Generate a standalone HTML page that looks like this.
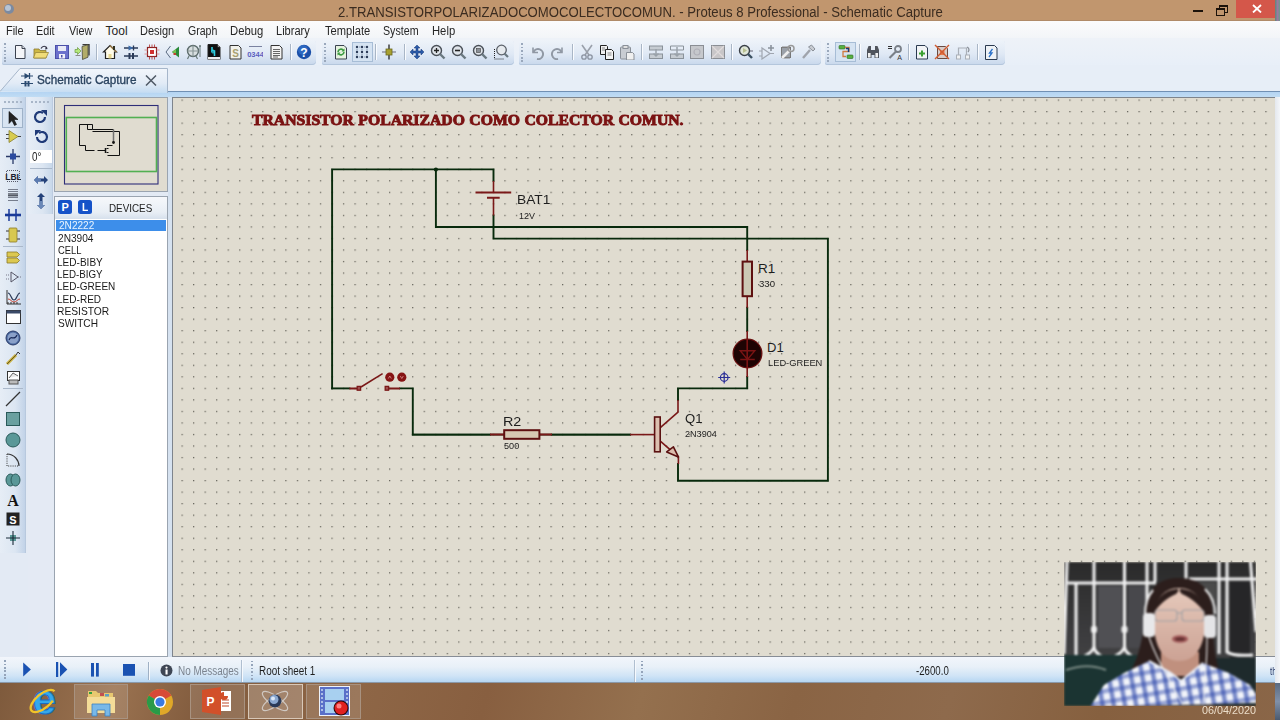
<!DOCTYPE html>
<html><head><meta charset="utf-8"><style>
*{margin:0;padding:0;box-sizing:border-box}
html,body{width:1280px;height:720px;overflow:hidden}
body{position:relative;background:#e3eaf4;font-family:"Liberation Sans",sans-serif;color:#000}
.a{position:absolute}
.t{position:absolute;white-space:nowrap;line-height:1;transform-origin:0 0}
</style></head><body>
<div class="a" style="left:0;top:0;width:1280px;height:21px;background:#c1966e;border-bottom:1px solid #b08a68"></div>
<svg class="a" style="left:2px;top:2px;" width="14" height="14" viewBox="0 0 14 14"><circle cx="7" cy="7" r="5" fill="#7c8aa0"/><circle cx="6" cy="6" r="3" fill="#b8c4d4"/></svg>
<div class="t" style="left:338.00px;top:4.50px;font-family:'Liberation Sans',sans-serif;font-weight:normal;font-size:14px;color:#3b2c20;transform:scaleX(0.9387);">2.TRANSISTORPOLARIZADOCOMOCOLECTOCOMUN. - Proteus 8 Professional - Schematic Capture</div>
<div class="a" style="left:1193px;top:10px;width:10px;height:2px;background:#1c120a"></div>
<div class="a" style="left:1219px;top:5px;width:9px;height:8px;border:1px solid #1c120a;border-top-width:2px"></div>
<div class="a" style="left:1216px;top:8px;width:9px;height:8px;border:1px solid #1c120a;border-top-width:2px;background:#c1966e"></div>
<div class="a" style="left:1236px;top:0;width:39px;height:18px;background:#d4574a"></div>
<svg class="a" style="left:1252px;top:4px;" width="10" height="9" viewBox="0 0 10 9"><path d="M1 1L9 8.5M9 1L1 8.5" stroke="#fff" stroke-width="1.8"/></svg>
<div class="a" style="left:1275px;top:0;width:5px;height:21px;background:linear-gradient(90deg,#5a8a7a,#9a7aa0,#6a9a8a)"></div>
<div class="a" style="left:0;top:21px;width:1280px;height:17px;background:linear-gradient(#fbfbfc,#f3f5f8)"></div>
<div class="t" style="left:6.19px;top:25.20px;font-family:'Liberation Sans',sans-serif;font-weight:normal;font-size:12px;color:#262626;transform:scaleX(0.9111);">File</div>
<div class="t" style="left:36.10px;top:25.20px;font-family:'Liberation Sans',sans-serif;font-weight:normal;font-size:12px;color:#262626;transform:scaleX(0.9000);">Edit</div>
<div class="t" style="left:68.50px;top:25.20px;font-family:'Liberation Sans',sans-serif;font-weight:normal;font-size:12px;color:#262626;transform:scaleX(0.9038);">View</div>
<div class="t" style="left:105.60px;top:25.20px;font-family:'Liberation Sans',sans-serif;font-weight:normal;font-size:12px;color:#262626;">Tool</div>
<div class="t" style="left:140.08px;top:25.20px;font-family:'Liberation Sans',sans-serif;font-weight:normal;font-size:12px;color:#262626;transform:scaleX(0.9167);">Design</div>
<div class="t" style="left:188.00px;top:25.20px;font-family:'Liberation Sans',sans-serif;font-weight:normal;font-size:12px;color:#262626;transform:scaleX(0.8788);">Graph</div>
<div class="t" style="left:230.36px;top:25.20px;font-family:'Liberation Sans',sans-serif;font-weight:normal;font-size:12px;color:#262626;transform:scaleX(0.9382);">Debug</div>
<div class="t" style="left:276.28px;top:25.20px;font-family:'Liberation Sans',sans-serif;font-weight:normal;font-size:12px;color:#262626;transform:scaleX(0.9222);">Library</div>
<div class="t" style="left:324.50px;top:25.20px;font-family:'Liberation Sans',sans-serif;font-weight:normal;font-size:12px;color:#262626;transform:scaleX(0.9286);">Template</div>
<div class="t" style="left:382.91px;top:25.20px;font-family:'Liberation Sans',sans-serif;font-weight:normal;font-size:12px;color:#262626;transform:scaleX(0.8897);">System</div>
<div class="t" style="left:432.06px;top:25.20px;font-family:'Liberation Sans',sans-serif;font-weight:normal;font-size:12px;color:#262626;transform:scaleX(0.9375);">Help</div>
<div class="a" style="left:0;top:38px;width:1280px;height:27px;background:linear-gradient(#eef2f8,#e8eff8)"></div>
<div class="a" style="left:2px;top:40px;width:314px;height:25px;border-radius:2px 4px 4px 2px;background:linear-gradient(#eef3f9,#e0e9f5 55%,#c8d8ec);box-shadow:inset 0 -1px 0 #b4c6dc"></div><div class="a" style="left:4px;top:43px;width:2px;height:19px;background:repeating-linear-gradient(#9aa8bc 0 1.5px,transparent 1.5px 3.5px)"></div>
<div class="a" style="left:322px;top:40px;width:192px;height:25px;border-radius:2px 4px 4px 2px;background:linear-gradient(#eef3f9,#e0e9f5 55%,#c8d8ec);box-shadow:inset 0 -1px 0 #b4c6dc"></div><div class="a" style="left:324px;top:43px;width:2px;height:19px;background:repeating-linear-gradient(#9aa8bc 0 1.5px,transparent 1.5px 3.5px)"></div>
<div class="a" style="left:519px;top:40px;width:302px;height:25px;border-radius:2px 4px 4px 2px;background:linear-gradient(#eef3f9,#e0e9f5 55%,#c8d8ec);box-shadow:inset 0 -1px 0 #b4c6dc"></div><div class="a" style="left:521px;top:43px;width:2px;height:19px;background:repeating-linear-gradient(#9aa8bc 0 1.5px,transparent 1.5px 3.5px)"></div>
<div class="a" style="left:825px;top:40px;width:180px;height:25px;border-radius:2px 4px 4px 2px;background:linear-gradient(#eef3f9,#e0e9f5 55%,#c8d8ec);box-shadow:inset 0 -1px 0 #b4c6dc"></div><div class="a" style="left:827px;top:43px;width:2px;height:19px;background:repeating-linear-gradient(#9aa8bc 0 1.5px,transparent 1.5px 3.5px)"></div>
<div class="a" style="left:96px;top:44px;width:1px;height:16px;background:#a9b6c6;box-shadow:1px 0 0 #fafcff"></div>
<div class="a" style="left:290px;top:44px;width:1px;height:16px;background:#a9b6c6;box-shadow:1px 0 0 #fafcff"></div>
<div class="a" style="left:375px;top:44px;width:1px;height:16px;background:#a9b6c6;box-shadow:1px 0 0 #fafcff"></div>
<div class="a" style="left:404px;top:44px;width:1px;height:16px;background:#a9b6c6;box-shadow:1px 0 0 #fafcff"></div>
<div class="a" style="left:572px;top:44px;width:1px;height:16px;background:#a9b6c6;box-shadow:1px 0 0 #fafcff"></div>
<div class="a" style="left:641px;top:44px;width:1px;height:16px;background:#a9b6c6;box-shadow:1px 0 0 #fafcff"></div>
<div class="a" style="left:731px;top:44px;width:1px;height:16px;background:#a9b6c6;box-shadow:1px 0 0 #fafcff"></div>
<div class="a" style="left:859px;top:44px;width:1px;height:16px;background:#a9b6c6;box-shadow:1px 0 0 #fafcff"></div>
<div class="a" style="left:908px;top:44px;width:1px;height:16px;background:#a9b6c6;box-shadow:1px 0 0 #fafcff"></div>
<div class="a" style="left:977px;top:44px;width:1px;height:16px;background:#a9b6c6;box-shadow:1px 0 0 #fafcff"></div>
<div class="a" style="left:352px;top:42px;width:21px;height:20px;background:#d5e3f2;border:1px solid #a7bdd6"></div>
<div class="a" style="left:835px;top:42px;width:21px;height:20px;background:#d5e3f2;border:1px solid #a7bdd6"></div>
<svg class="a" style="left:11.5px;top:44px;" width="16" height="16" viewBox="0 0 16 16"><path d="M3.5 1.5h6.5l3 3v10h-9.5z" fill="#f4f5f8" stroke="#3b4250"/><path d="M10 1.5v3h3" fill="#d8dbe2" stroke="#3b4250"/></svg>
<svg class="a" style="left:33px;top:44px;" width="16" height="16" viewBox="0 0 16 16"><path d="M1 5h5l1 1.5h6v7.5H1z" fill="#cdb845" stroke="#8a7a30" stroke-width=".8"/><path d="M2.5 8.5h13l-2.5 5.5H0.5z" fill="#f0dc78" stroke="#9a8838" stroke-width=".8"/><path d="M8 4.5c1.5-3 5-3 6 0" fill="none" stroke="#334" stroke-width="1.2"/><path d="M13 2.5l1.5 2.5-2.5.5z" fill="#334"/></svg>
<svg class="a" style="left:53.5px;top:44px;" width="16" height="16" viewBox="0 0 16 16"><rect x="1.5" y="1.5" width="13" height="13" fill="#6b70cc" stroke="#4a4fa8"/><rect x="4" y="2" width="8" height="5" fill="#e8eaf6"/><rect x="5" y="10" width="6" height="4.5" fill="#f0f0f8"/><rect x="7" y="11" width="1.5" height="2.5" fill="#4a4fa8"/></svg>
<svg class="a" style="left:74px;top:44px;" width="16" height="16" viewBox="0 0 16 16"><path d="M8.5 .5h6.5v11" fill="none" stroke="#3a3a3a" stroke-width="1.4"/><path d="M8 2.5l6-1.8v12.5L8.5 15.5z" fill="#b2ac68" stroke="#4a4a3a" stroke-width=".8"/><path d="M1 5.5h2.5v-2l3.5 3.5-3.5 3.5v-2H1z" fill="#b4e87a" stroke="#6a9a40" stroke-width=".7"/><path d="M1.5 11.5h5" stroke="#8a8a8a" stroke-width="1"/></svg>
<svg class="a" style="left:102px;top:44px;" width="16" height="16" viewBox="0 0 16 16"><path d="M8 1.5l6.5 6.5h-2v6.5h-9V8h-2z" fill="#fffbe8" stroke="#222" stroke-width="1.2"/><path d="M8 1.5l6.5 6.5" stroke="#a08050" stroke-width="1.3"/><rect x="6.5" y="10" width="3" height="4.5" fill="#e8d890"/><rect x="11" y="2" width="2" height="4" fill="#332"/></svg>
<svg class="a" style="left:123px;top:44px;" width="16" height="16" viewBox="0 0 16 16"><path d="M1 4h14M1 12h14" stroke="#2a3a58" stroke-width="1.3"/><path d="M5.5 1.5v5l5-2.5z" fill="#3a6aa8"/><path d="M10.5 1.5v5" stroke="#2a3a58" stroke-width="1.3"/><rect x="5.5" y="9" width="2" height="6" fill="#2a3a58"/><rect x="9" y="9" width="2" height="6" fill="#2a3a58"/></svg>
<svg class="a" style="left:144px;top:44px;" width="16" height="16" viewBox="0 0 16 16"><rect x="3.5" y="3.5" width="9" height="9" fill="#fff" stroke="#8a2020" stroke-width="1.2"/><rect x="6" y="6" width="4" height="4" fill="#d03030"/><path d="M5.5 .5v3M8 .5v3M10.5 .5v3M5.5 12.5v3M8 12.5v3M10.5 12.5v3" stroke="#b03030" stroke-width=".8"/><path d="M.5 6h3M.5 10h3M12.5 6h3M12.5 10h3" stroke="#e08a8a" stroke-width=".9"/></svg>
<svg class="a" style="left:164.5px;top:44px;" width="16" height="16" viewBox="0 0 16 16"><path d="M5.5 2L1 8l4.5 6" fill="none" stroke="#5a6a80" stroke-width="1"/><path d="M7 8l7-5.5v11z" fill="#2a8a3a"/><path d="M7 8l4-3v5z" fill="#7ac050"/><rect x="8.5" y="9" width="2.5" height="2" fill="#c04030"/></svg>
<svg class="a" style="left:185.5px;top:44px;" width="16" height="16" viewBox="0 0 16 16"><circle cx="7" cy="7" r="5.5" fill="#d8dfe0" stroke="#5a6a6a" stroke-width="1.4"/><path d="M7 1.5v11M1.5 7h11" stroke="#8a9898" stroke-width="1.2"/><path d="M3 12l-1.5 3M10 12l1.5 3" stroke="#6a7a7a" stroke-width="1.2"/><path d="M14 2v11" stroke="#6a7a7a"/><circle cx="14" cy="2" r="1" fill="#6a7a7a"/></svg>
<svg class="a" style="left:206px;top:44px;" width="16" height="16" viewBox="0 0 16 16"><path d="M2 .5h9.5l2.5 2.5v12.5H2z" fill="#111" stroke="#222"/><path d="M11.5 .5v2.5h2.5" fill="#eee" stroke="#333"/><path d="M6 3v4h2.5v5" stroke="#30d0e0" stroke-width="1.6" fill="none"/><circle cx="7" cy="7.5" r="1.5" fill="none" stroke="#30d0e0"/><rect x="2" y="13" width="12" height="2.5" fill="#eee"/></svg>
<svg class="a" style="left:226.5px;top:44px;" width="16" height="16" viewBox="0 0 16 16"><path d="M3 1.5h8.5l2.5 2.5v11H3z" fill="#f2f2ec" stroke="#333"/><text x="8.5" y="12.5" font-family="Liberation Sans" font-weight="bold" font-size="10" fill="#a8a070" text-anchor="middle">S</text></svg>
<svg class="a" style="left:247px;top:44px;" width="16" height="16" viewBox="0 0 16 16"><path d="M2 2.5h13" stroke="#7a82a0" stroke-width="1"/><text x="8.5" y="12.5" font-family="Liberation Sans" font-weight="bold" font-size="7.5" fill="#5a60c0" text-anchor="middle">0344</text></svg>
<svg class="a" style="left:267.5px;top:44px;" width="16" height="16" viewBox="0 0 16 16"><path d="M3 1.5h8.5l2.5 2.5v11H3z" fill="#f4f4f4" stroke="#333"/><path d="M5 5.5h7M5 7.5h7M5 9.5h7M5 11.5h7M5 13h5" stroke="#666" stroke-width="1"/></svg>
<svg class="a" style="left:295.5px;top:44px;" width="16" height="16" viewBox="0 0 16 16"><circle cx="8" cy="8" r="7.2" fill="#1b4fa8"/><circle cx="7" cy="6" r="5" fill="#3a78d0" opacity=".6"/><text x="8" y="12.5" font-family="Liberation Sans" font-weight="bold" font-size="12" fill="#fff" text-anchor="middle">?</text></svg>
<svg class="a" style="left:332.5px;top:44px;" width="16" height="16" viewBox="0 0 16 16"><path d="M2.5 1.5h8.5l2.5 2.5v11h-11z" fill="#e6f2e0" stroke="#3a4250"/><path d="M5 8a3 3 0 0 1 5.5-1.5M11 8a3 3 0 0 1-5.5 1.5" stroke="#3a9a40" stroke-width="1.6" fill="none"/><path d="M11.5 4.5v3h-3z M4.5 11.5v-3h3z" fill="#3a9a40"/></svg>
<svg class="a" style="left:354px;top:44px;" width="16" height="16" viewBox="0 0 16 16"><g fill="#2a3a58"><circle cx="3" cy="3" r="1.2"/><circle cx="8" cy="3" r="1.2"/><circle cx="13" cy="3" r="1.2"/><circle cx="3" cy="8" r="1.2"/><circle cx="8" cy="8" r="1.2"/><circle cx="13" cy="8" r="1.2"/><circle cx="3" cy="13" r="1.2"/><circle cx="8" cy="13" r="1.2"/><circle cx="13" cy="13" r="1.2"/></g><path d="M3 5v1.5M8 5v1.5M13 5v1.5M3 10v1.5M8 10v1.5M13 10v1.5M5 3h1.5M10 3h1.5M5 13h1.5M10 13h1.5" stroke="#8a9ab0"/></svg>
<svg class="a" style="left:381px;top:44px;" width="16" height="16" viewBox="0 0 16 16"><path d="M8 .5v15" stroke="#222" stroke-width="1.3"/><path d="M1 8h14" stroke="#889" stroke-width="1.3"/><rect x="5" y="5" width="6" height="6" fill="#a8a030" stroke="#6a6820" stroke-width=".8"/></svg>
<svg class="a" style="left:409px;top:44px;" width="16" height="16" viewBox="0 0 16 16"><path d="M8 1l3 3H9v3h3V5l3 3-3 3V9H9v3h2l-3 3-3-3h2V9H4v2L1 8l3-3v2h3V4H5z" fill="#2a5aa8" stroke="#1a3a78" stroke-width=".5"/></svg>
<svg class="a" style="left:429.5px;top:44px;" width="16" height="16" viewBox="0 0 16 16"><circle cx="6.5" cy="6.5" r="5" fill="#dfe4ea" stroke="#4a5058" stroke-width="1.4"/><path d="M4 6.5h5M6.5 4v5" stroke="#222" stroke-width="1.3"/><path d="M10 10l4.5 4.5" stroke="#6a7880" stroke-width="2.4"/></svg>
<svg class="a" style="left:450.5px;top:44px;" width="16" height="16" viewBox="0 0 16 16"><circle cx="6.5" cy="6.5" r="5" fill="#dfe4ea" stroke="#4a5058" stroke-width="1.4"/><path d="M4 6.5h5" stroke="#222" stroke-width="1.6"/><path d="M10 10l4.5 4.5" stroke="#6a7880" stroke-width="2.4"/></svg>
<svg class="a" style="left:471.5px;top:44px;" width="16" height="16" viewBox="0 0 16 16"><circle cx="6.5" cy="6.5" r="5" fill="#dfe4ea" stroke="#4a5058" stroke-width="1.4"/><rect x="4.5" y="4.5" width="4" height="4" fill="#8a9098" stroke="#444" stroke-width=".6"/><path d="M10 10l4.5 4.5" stroke="#6a7880" stroke-width="2.4"/></svg>
<svg class="a" style="left:492.5px;top:44px;" width="16" height="16" viewBox="0 0 16 16"><path d="M1.5 5v10h9" stroke="#222" stroke-dasharray="1 1" fill="none"/><circle cx="8.5" cy="6" r="4.8" fill="#e6eaee" stroke="#5a6068" stroke-width="1.3"/><path d="M11.5 9.5l3.5 3.5" stroke="#6a7880" stroke-width="2.2"/></svg>
<svg class="a" style="left:529px;top:44px;" width="16" height="16" viewBox="0 0 16 16"><path d="M4 3.5v5h5" fill="none" stroke="#9098a4" stroke-width="1.6"/><path d="M4.5 8a5 5 0 1 1 3.5 7" fill="none" stroke="#9098a4" stroke-width="2"/></svg>
<svg class="a" style="left:550px;top:44px;" width="16" height="16" viewBox="0 0 16 16"><path d="M12 3.5v5H7" fill="none" stroke="#9098a4" stroke-width="1.6"/><path d="M11.5 8a5 5 0 1 0-3.5 7" fill="none" stroke="#9098a4" stroke-width="2"/></svg>
<svg class="a" style="left:579px;top:44px;" width="16" height="16" viewBox="0 0 16 16"><path d="M3 1l7 10M13 1L6 11" stroke="#9aa0aa" stroke-width="1.6"/><circle cx="5" cy="13" r="2.2" fill="none" stroke="#8a92a0" stroke-width="1.3"/><circle cx="11" cy="13" r="2.2" fill="none" stroke="#8a92a0" stroke-width="1.3"/></svg>
<svg class="a" style="left:599px;top:44px;" width="16" height="16" viewBox="0 0 16 16"><path d="M1.5 1.5h6l1 1v8h-7z" fill="#f0f0f0" stroke="#222"/><path d="M6.5 5.5h6l2 2v8h-8z" fill="#f4f4f4" stroke="#222"/><path d="M3 4h3M3 6h3M8.5 9h4M8.5 11h4" stroke="#888"/></svg>
<svg class="a" style="left:619px;top:44px;" width="16" height="16" viewBox="0 0 16 16"><rect x="1.5" y="3" width="10" height="12" rx="1" fill="#c8ccd2" stroke="#8a9098"/><rect x="4" y="1.5" width="5" height="3" fill="#e0e0e0" stroke="#8a9098"/><path d="M7.5 8.5h6l1.5 1.5v6h-7.5z" fill="#f0f0f0" stroke="#8a9098"/></svg>
<svg class="a" style="left:648px;top:44px;" width="16" height="16" viewBox="0 0 16 16"><rect x="1.5" y="2" width="13" height="4" fill="#c6ccd2" stroke="#8a929a"/><rect x="1.5" y="10" width="13" height="4.5" fill="#c6ccd2" stroke="#8a929a"/><path d="M8 5v7M5.5 9.5L8 12l2.5-2.5" stroke="#9aa2aa" stroke-width="1.5" fill="none"/></svg>
<svg class="a" style="left:669px;top:44px;" width="16" height="16" viewBox="0 0 16 16"><path d="M1.5 2h13v4h-13z" fill="none" stroke="#8a929a"/><rect x="1.5" y="10" width="13" height="4.5" fill="#c6ccd2" stroke="#8a929a"/><path d="M8 3v9M5.5 9.5L8 12l2.5-2.5" stroke="#9aa2aa" stroke-width="1.5" fill="none"/></svg>
<svg class="a" style="left:689px;top:44px;" width="16" height="16" viewBox="0 0 16 16"><rect x="1.5" y="1.5" width="13" height="13" fill="#c6c8cc" stroke="#8a8e94"/><circle cx="8" cy="8" r="3" fill="none" stroke="#b0b0b8" stroke-width="1.2"/></svg>
<svg class="a" style="left:710px;top:44px;" width="16" height="16" viewBox="0 0 16 16"><rect x="1.5" y="1.5" width="13" height="13" fill="#c8c6c8" stroke="#8a8e94"/><path d="M2 2l12 12M14 2L2 14" stroke="#e0dcdc" stroke-width="1.2"/></svg>
<svg class="a" style="left:738px;top:44px;" width="16" height="16" viewBox="0 0 16 16"><circle cx="6.5" cy="6.5" r="5" fill="#dfe6d8" stroke="#3a4048" stroke-width="1.4"/><path d="M5 4v5l4-2.5z" fill="#b8c090"/><path d="M10 10l4 4" stroke="#3a5060" stroke-width="2.4"/><path d="M12 7h3" stroke="#667"/></svg>
<svg class="a" style="left:759px;top:44px;" width="16" height="16" viewBox="0 0 16 16"><path d="M3 4v11l8-5.5z" fill="none" stroke="#a0a6b0" stroke-width="1.2"/><path d="M0 7h3M0 12h3M11 9.5h4" stroke="#a0a6b0"/><path d="M12 1v6M9 4h6" stroke="#8a929c" stroke-width="1.6"/></svg>
<svg class="a" style="left:779px;top:44px;" width="16" height="16" viewBox="0 0 16 16"><rect x="2.5" y="3.5" width="9" height="10" fill="#9aa0a8" stroke="#777"/><path d="M4 2v2M6 2v2M8 2v2M10 2v2M4 13v2M6 13v2M8 13v2M10 13v2" stroke="#888"/><path d="M3 14l8-8" stroke="#eee" stroke-width="2.5"/><circle cx="12" cy="4.5" r="3" fill="none" stroke="#999" stroke-width="1.5"/></svg>
<svg class="a" style="left:800px;top:44px;" width="16" height="16" viewBox="0 0 16 16"><path d="M3 14l7-8" stroke="#a0a4ac" stroke-width="2.4"/><path d="M8.5 3l3-2 3.5 4-2 2z" fill="#c8ccd2" stroke="#8a9098"/></svg>
<svg class="a" style="left:837.5px;top:44px;" width="16" height="16" viewBox="0 0 16 16"><rect x="1" y="1.5" width="6" height="3.5" rx=".8" fill="#58b040" stroke="#2a6a20" stroke-width=".6"/><rect x="9" y="11" width="6" height="3.5" rx=".8" fill="#58b040" stroke="#2a6a20" stroke-width=".6"/><path d="M7 3.5h4v4H5v5h3" fill="none" stroke="#d07a40" stroke-width="1.3"/><path d="M8 4.5h2.5v3.5" fill="none" stroke="#1a3a78" stroke-width="1.4"/></svg>
<svg class="a" style="left:865px;top:44px;" width="16" height="16" viewBox="0 0 16 16"><path d="M2 6l1.5-4h2.5v4h4V2h2.5L14 6v8h-4.5v-3h-3v3H2z" fill="#50545c"/><rect x="3" y="9" width="2.6" height="4.5" fill="#f0f0f0"/><rect x="10.4" y="9" width="2.6" height="4.5" fill="#f0f0f0"/></svg>
<svg class="a" style="left:887px;top:44px;" width="16" height="16" viewBox="0 0 16 16"><path d="M1 2.5h4M1 4.5h4" stroke="#333" stroke-width="1.1"/><path d="M2.5 14l7-7" stroke="#7a8088" stroke-width="2.2"/><circle cx="11" cy="5" r="3" fill="none" stroke="#7a8088" stroke-width="1.8"/><text x="12.5" y="15.5" font-family="Liberation Sans" font-size="7" fill="#333" text-anchor="middle">A</text></svg>
<svg class="a" style="left:913.5px;top:44px;" width="16" height="16" viewBox="0 0 16 16"><path d="M2.5 1.5h8.5l2.5 2.5v11h-11z" fill="#f2f4f6" stroke="#2a3a50"/><path d="M8 6.5v6M5 9.5h6" stroke="#3aa030" stroke-width="2"/></svg>
<svg class="a" style="left:934px;top:44px;" width="16" height="16" viewBox="0 0 16 16"><path d="M3.5 2.5h8l2 2v10h-10z" fill="#d8ccc8" stroke="#6a4a40"/><rect x="6" y="6.5" width="4.5" height="4.5" fill="#e87a4a"/><path d="M1 1l14 14M15 1L1 15" stroke="#d05a30" stroke-width="1.4"/></svg>
<svg class="a" style="left:955px;top:44px;" width="16" height="16" viewBox="0 0 16 16"><rect x="1.5" y="11" width="4" height="4" fill="#f0f2f4" stroke="#aab0b8"/><rect x="10.5" y="11" width="4" height="4" fill="#f0f2f4" stroke="#aab0b8"/><path d="M3.5 11V4h8v7" fill="none" stroke="#aab0b8" stroke-width="1.2"/><path d="M12 3a3 3 0 0 1 1 5" stroke="#8a9098" fill="none" stroke-width="1.3"/></svg>
<svg class="a" style="left:983px;top:44px;" width="16" height="16" viewBox="0 0 16 16"><path d="M2.5 1.5h9l2.5 2.5v11.5H2.5z" fill="#eef2f6" stroke="#2a3a50"/><path d="M9.5 5l-3 4h2.5L6 13" fill="none" stroke="#2a70c8" stroke-width="1.3"/></svg>
<div class="a" style="left:0;top:65px;width:1280px;height:32px;background:#e7eef7"></div>
<div class="a" style="left:167px;top:90.5px;width:1113px;height:1.5px;background:#7090b4"></div>
<div class="a" style="left:0;top:92px;width:1280px;height:5px;background:linear-gradient(#b4d4f2,#c0dcf4)"></div>
<svg class="a" style="left:0px;top:66px;" width="170" height="27" viewBox="0 0 170 27"><path d="M0 25.5L20 2.5H167.5V27" fill="url(#tabg)" stroke="#a6b6ca" stroke-width="1"/><defs><linearGradient id="tabg" x1="0" y1="0" x2="0" y2="1"><stop offset="0" stop-color="#f2f6fb"/><stop offset=".6" stop-color="#e2ebf6"/><stop offset="1" stop-color="#c4dcf2"/></linearGradient></defs></svg>
<svg class="a" style="left:21px;top:72px;" width="12" height="15" viewBox="0 0 12 15"><path d="M0 4h12M0 11.5h12" stroke="#2a4a70" stroke-width="1.2"/><path d="M3.5 1v6l5-3z" fill="#2a4a70"/><path d="M8.5 1v6" stroke="#2a4a70" stroke-width="1.3"/><rect x="3.5" y="9" width="2" height="5.5" fill="#2a4a70"/><rect x="6.5" y="9" width="2" height="5.5" fill="#2a4a70"/></svg>
<div class="t" style="left:36.62px;top:74.20px;font-family:'Liberation Sans',sans-serif;font-weight:normal;font-size:12px;color:#2b4460;transform:scaleX(0.9752);-webkit-text-stroke:0.35px #2b4460;">Schematic Capture</div>
<svg class="a" style="left:145px;top:75px;" width="12" height="11" viewBox="0 0 12 11"><path d="M1 .5l10 10M11 .5L1 10.5" stroke="#505a66" stroke-width="1.5"/></svg>
<div class="a" style="left:0;top:97px;width:26px;height:456px;background:linear-gradient(90deg,#e6edf6,#dce6f2 60%,#c2d3e8);border-right:1px solid #b8c9de"></div>
<div class="a" style="left:4px;top:101px;width:18px;height:2px;background:repeating-linear-gradient(90deg,#a8b6c8 0 2px,transparent 2px 4px)"></div>
<div class="a" style="left:28px;top:97px;width:25px;height:117px;background:linear-gradient(90deg,#e6edf6,#dce6f2 60%,#c8d8ea);border-right:1px solid #bccbe0"></div>
<div class="a" style="left:31px;top:101px;width:20px;height:2px;background:repeating-linear-gradient(90deg,#a8b6c8 0 2px,transparent 2px 4px)"></div>
<div class="a" style="left:28px;top:214px;width:25px;height:443px;background:#e4eaf4"></div>
<div class="a" style="left:2px;top:108px;width:21px;height:20px;background:#d8e4f2;border:1px solid #9fb2c8"></div>
<div class="a" style="left:3px;top:246px;width:20px;height:1px;background:#aab8ca"></div>
<div class="a" style="left:3px;top:388px;width:20px;height:1px;background:#aab8ca"></div>
<div class="a" style="left:30px;top:150px;width:22px;height:13px;background:#fff"></div>
<div class="t" style="left:31.50px;top:151.00px;font-family:'Liberation Sans',sans-serif;font-weight:normal;font-size:12px;color:#222;transform:scaleX(0.8182);">0°</div>
<div class="a" style="left:30px;top:168px;width:22px;height:1px;background:#aab8ca"></div>
<svg class="a" style="left:4.5px;top:109.5px;" width="16" height="16" viewBox="0 0 16 16"><path d="M4 1.5v12l3-3 2.5 5 2-1-2.5-5h4z" fill="#222" stroke="#111" stroke-width=".6"/></svg>
<svg class="a" style="left:4.5px;top:128px;" width="16" height="16" viewBox="0 0 16 16"><path d="M1 6.5h3M1 10.5h3M13 8.5h3" stroke="#444" stroke-width="1"/><path d="M4 2.5v12l9-6z" fill="#d8cc50" stroke="#8a8030" stroke-width=".8"/></svg>
<svg class="a" style="left:4.5px;top:147.5px;" width="16" height="16" viewBox="0 0 16 16"><path d="M8 1v15M1 8.5h14" stroke="#2a3a68" stroke-width="1.3"/><rect x="5" y="5.5" width="6" height="6" fill="#2a4aa0"/></svg>
<svg class="a" style="left:4.5px;top:167px;" width="16" height="16" viewBox="0 0 16 16"><text x="8.5" y="12.5" font-family="Liberation Sans" font-weight="bold" font-size="8.5" fill="#1a2030" text-anchor="middle">LBL</text><path d="M2 3.5h12M2 14.5h12M1.5 4v10M14.5 4v10" stroke="#334" stroke-width=".8" stroke-dasharray="1 1"/></svg>
<svg class="a" style="left:4.5px;top:187px;" width="16" height="16" viewBox="0 0 16 16"><path d="M3 2.5h10M3 4.5h10M3 10.5h10M3 13.5h10" stroke="#6a7080" stroke-width=".9"/><path d="M3 7h10M3 8.8h10" stroke="#1a1e28" stroke-width="1"/></svg>
<svg class="a" style="left:4.5px;top:206.5px;" width="16" height="16" viewBox="0 0 16 16"><path d="M0 8h16" stroke="#1a3a98" stroke-width="2.6"/><path d="M4 2v12M11 2v12" stroke="#1a3a98" stroke-width="1.5"/></svg>
<svg class="a" style="left:4.5px;top:227px;" width="16" height="16" viewBox="0 0 16 16"><path d="M1 4h3M1 12h3M12 4h3M12 12h3" stroke="#333" stroke-width="1"/><rect x="4" y="1" width="8" height="14" rx="1" fill="#d8c850" stroke="#8a7a28" stroke-width=".8"/></svg>
<svg class="a" style="left:4.5px;top:249px;" width="16" height="16" viewBox="0 0 16 16"><path d="M2 3h10l2.5 2.5L12 8H2z" fill="#dcc850" stroke="#8a7a28" stroke-width=".8"/><path d="M2 9h10l2.5 2.5L12 14H2z" fill="#dcc850" stroke="#8a7a28" stroke-width=".8"/></svg>
<svg class="a" style="left:4.5px;top:269px;" width="16" height="16" viewBox="0 0 16 16"><path d="M6 3v10l7-5z" fill="none" stroke="#556" stroke-width="1"/><path d="M1 6h3M1 10h3M13 8h3" stroke="#778" stroke-dasharray="1 1"/></svg>
<svg class="a" style="left:4.5px;top:289px;" width="16" height="16" viewBox="0 0 16 16"><path d="M2 1v14h14" fill="none" stroke="#333" stroke-width="1"/><path d="M3 4c3 0 3 7 6 7s3-7 6-7" stroke="#2a3a58" fill="none" stroke-width="1.2"/><path d="M3 10c3 0 3 3 6 3s3-3 6-3" stroke="#c04030" fill="none" stroke-width="1"/><path d="M3 15v-2M6 15v-2M9 15v-2M12 15v-2" stroke="#333"/></svg>
<svg class="a" style="left:4.5px;top:309px;" width="16" height="16" viewBox="0 0 16 16"><rect x="1.5" y="1.5" width="14" height="13" fill="#fff" stroke="#333"/><rect x="1.5" y="1.5" width="14" height="3" fill="#3a4a68"/></svg>
<svg class="a" style="left:4.5px;top:329.5px;" width="16" height="16" viewBox="0 0 16 16"><circle cx="8" cy="8" r="7" fill="#4a6aa0" stroke="#2a3a68"/><circle cx="8" cy="8" r="5.5" fill="#8aa0c8"/><path d="M4 10c2-6 5 2 8-5" stroke="#1a2a58" fill="none" stroke-width="1.2"/></svg>
<svg class="a" style="left:4.5px;top:349px;" width="16" height="16" viewBox="0 0 16 16"><path d="M2 15l9-9" stroke="#c8b040" stroke-width="3"/><path d="M2 15l9-9" stroke="#6a5a20" stroke-width="1"/><path d="M11 6l2-3 2 2" stroke="#333" fill="none"/></svg>
<svg class="a" style="left:4.5px;top:369px;" width="16" height="16" viewBox="0 0 16 16"><rect x="2.5" y="2.5" width="12" height="9" fill="#fff" stroke="#333"/><path d="M4 9l4-5 5 3" fill="#e8e8e8" stroke="#666"/><rect x="4" y="11" width="9" height="4" fill="#bbb" stroke="#555"/></svg>
<svg class="a" style="left:4.5px;top:391px;" width="16" height="16" viewBox="0 0 16 16"><path d="M1 15L15 1" stroke="#333" stroke-width="1.2"/></svg>
<svg class="a" style="left:4.5px;top:411px;" width="16" height="16" viewBox="0 0 16 16"><rect x="1.5" y="1.5" width="13" height="13" fill="#6aa0a0" stroke="#2a5a5a"/></svg>
<svg class="a" style="left:4.5px;top:431.5px;" width="16" height="16" viewBox="0 0 16 16"><circle cx="8" cy="8" r="7" fill="#5a9898" stroke="#2a5a5a"/></svg>
<svg class="a" style="left:4.5px;top:452px;" width="16" height="16" viewBox="0 0 16 16"><path d="M2 2c7 0 12 6 12 12" fill="none" stroke="#333" stroke-width="1.1"/><path d="M2 2v12h12" fill="none" stroke="#333" stroke-dasharray="1 1.2"/></svg>
<svg class="a" style="left:4.5px;top:471.5px;" width="16" height="16" viewBox="0 0 16 16"><ellipse cx="5.5" cy="8" rx="4.5" ry="6" fill="#5a9898" stroke="#2a5a5a"/><ellipse cx="10.5" cy="8" rx="4.5" ry="6" fill="#5a9898" stroke="#2a5a5a"/></svg>
<svg class="a" style="left:4.5px;top:491px;" width="16" height="16" viewBox="0 0 16 16"><text x="8" y="14.5" font-family="Liberation Serif" font-weight="bold" font-size="16" fill="#111" text-anchor="middle">A</text></svg>
<svg class="a" style="left:4.5px;top:510.5px;" width="16" height="16" viewBox="0 0 16 16"><rect x="1.5" y="1.5" width="13" height="13" fill="#222"/><text x="8" y="12.5" font-family="Liberation Sans" font-weight="bold" font-size="11" fill="#fff" text-anchor="middle">S</text></svg>
<svg class="a" style="left:4.5px;top:530px;" width="16" height="16" viewBox="0 0 16 16"><rect x="5" y="5" width="6" height="6" fill="#5a9a98"/><path d="M8 1v14M1 8h14" stroke="#1a2a38" stroke-width="1.1"/></svg>
<svg class="a" style="left:33px;top:109px;" width="16" height="16" viewBox="0 0 16 16"><path d="M12 8a5 5 0 1 1-2-4" fill="none" stroke="#1f3a78" stroke-width="2.2"/><path d="M8 1h6v6z" fill="#1f3a78"/></svg>
<svg class="a" style="left:33px;top:129px;" width="16" height="16" viewBox="0 0 16 16"><path d="M4 8a5 5 0 1 0 2-4" fill="none" stroke="#1f3a78" stroke-width="2.2"/><path d="M8 1H2v6z" fill="#1f3a78"/></svg>
<svg class="a" style="left:33px;top:172px;" width="16" height="16" viewBox="0 0 16 16"><path d="M1 8l4-4v2.5h6V4l4 4-4 4V9.5H5V12z" fill="#24427a"/><path d="M1 8l4-4v2.5h3V9.5H5V12z" fill="#5a7ab0"/></svg>
<svg class="a" style="left:33px;top:192.5px;" width="16" height="16" viewBox="0 0 16 16"><path d="M8 0l4 4H9.5v8H12l-4 4-4-4h2.5V4H4z" fill="#24427a"/><path d="M8 16l-4-4h2.5V8h3v4H12z" fill="#6a88b8"/></svg>
<div class="a" style="left:54px;top:97px;width:114px;height:95px;background:#e0dcd0;border:1px solid #9aa4b0"></div>
<svg class="a" style="left:54px;top:97px;" width="114" height="95" viewBox="0 0 114 95"><rect x="10.5" y="8.5" width="93.5" height="78.5" fill="none" stroke="#2e2e78" stroke-width="1.1"/><rect x="12.3" y="20.5" width="90.2" height="54" fill="none" stroke="#52b052" stroke-width="1.6"/><g fill="none" stroke="#111" stroke-width="1"><path d="M25.5 48.5V27.5H38.5V32.5H59.5"/><path d="M33.5 27.5V32.5H38.5"/><path d="M38.5 34.5H65.5V58.5H53.5"/><path d="M25.5 48.5H31.5V53.5H40.5M43.5 53.5H51.5"/><path d="M51.5 51V56" stroke-width="1.5"/><path d="M58.5 48.5H53"/><path d="M52.5 51.5h2M52.5 55.5h2"/></g><path d="M59.5 32.5V45" stroke="#707070" stroke-width="1.5"/><circle cx="59.5" cy="45.5" r="1.4" fill="#111"/></svg>
<div class="a" style="left:54px;top:196px;width:114px;height:461px;background:#fff;border:1px solid #9aa4b0"></div>
<div class="a" style="left:55px;top:197px;width:112px;height:22px;background:linear-gradient(#f6f8fb,#e8eef5 70%,#d6e0ec)"></div>
<div class="a" style="left:58px;top:200px;width:14px;height:14px;border-radius:2.5px;background:#1552c8"></div>
<div class="a" style="left:77.5px;top:200px;width:14px;height:14px;border-radius:2.5px;background:#1552c8"></div>
<div class="t" style="left:61.50px;top:201.50px;font-family:'Liberation Sans',sans-serif;font-weight:bold;font-size:11px;color:#fff;">P</div>
<div class="t" style="left:81.50px;top:201.50px;font-family:'Liberation Sans',sans-serif;font-weight:bold;font-size:11px;color:#fff;transform:scaleX(0.9286);">L</div>
<div class="t" style="left:109.24px;top:202.60px;font-family:'Liberation Sans',sans-serif;font-weight:normal;font-size:11.5px;color:#222;transform:scaleX(0.8571);">DEVICES</div>
<div class="a" style="left:56px;top:219.6px;width:110px;height:11.5px;background:#3d8eea"></div>
<div class="t" style="left:58.60px;top:220.20px;font-family:'Liberation Sans',sans-serif;font-weight:normal;font-size:11.5px;color:#e8f4ff;transform:scaleX(0.8775);">2N2222</div>
<div class="t" style="left:58.30px;top:232.80px;font-family:'Liberation Sans',sans-serif;font-weight:normal;font-size:11.5px;color:#1a1a1a;transform:scaleX(0.8800);">2N3904</div>
<div class="t" style="left:58.30px;top:244.60px;font-family:'Liberation Sans',sans-serif;font-weight:normal;font-size:11.5px;color:#1a1a1a;transform:scaleX(0.8138);">CELL</div>
<div class="t" style="left:57.43px;top:256.90px;font-family:'Liberation Sans',sans-serif;font-weight:normal;font-size:11.5px;color:#1a1a1a;transform:scaleX(0.8745);">LED-BIBY</div>
<div class="t" style="left:57.45px;top:269.20px;font-family:'Liberation Sans',sans-serif;font-weight:normal;font-size:11.5px;color:#1a1a1a;transform:scaleX(0.8491);">LED-BIGY</div>
<div class="t" style="left:57.43px;top:281.20px;font-family:'Liberation Sans',sans-serif;font-weight:normal;font-size:11.5px;color:#1a1a1a;transform:scaleX(0.8682);">LED-GREEN</div>
<div class="t" style="left:57.43px;top:293.50px;font-family:'Liberation Sans',sans-serif;font-weight:normal;font-size:11.5px;color:#1a1a1a;transform:scaleX(0.8735);">LED-RED</div>
<div class="t" style="left:57.41px;top:305.80px;font-family:'Liberation Sans',sans-serif;font-weight:normal;font-size:11.5px;color:#1a1a1a;transform:scaleX(0.8912);">RESISTOR</div>
<div class="t" style="left:58.30px;top:318.00px;font-family:'Liberation Sans',sans-serif;font-weight:normal;font-size:11.5px;color:#1a1a1a;transform:scaleX(0.8822);">SWITCH</div>
<div class="a" style="left:168px;top:97px;width:4px;height:560px;background:#d6e2f0"></div>
<div class="a" style="left:172px;top:97px;width:1104px;height:560px;background:#e0dcd0;border-left:1.5px solid #7e848c;border-top:1.5px solid #7e848c;border-bottom:1px solid #878d96"></div>
<svg class="a" style="left:0px;top:0px;" width="1280" height="720" viewBox="0 0 1280 720"><defs><pattern id="dots" patternUnits="userSpaceOnUse" x="181.5" y="99.5" width="11.53" height="11.53"><rect x="0" y="0" width="1.25" height="1.25" fill="#66645c"/></pattern></defs>
<rect x="174" y="99" width="1101" height="557" fill="url(#dots)"/>
<g fill="none" stroke="#082a0c" stroke-width="1.9" stroke-linecap="square">
<path d="M332.1 388.4V169.4H493.5V180.9"/>
<path d="M435.9 169.4V227H747.2V250.1"/>
<path d="M493.5 215.5V238.6H827.9V480.7H678V464"/>
<path d="M747.2 307.7V331"/>
<path d="M747.2 376.9V388.4H678V400"/>
<path d="M332.1 388.4H349.4"/>
<path d="M400 388.4H412.8V434.6H630"/>
<path d="M412.8 434.6H490"/>
<path d="M552 434.6H630"/>
</g>
<circle cx="435.9" cy="169.6" r="2.1" fill="#082a0c"/>
<g fill="none" stroke="#7a1818" stroke-width="1.6">
<path d="M493.5 180.9V192.4M493.5 197.7V215.5"/>
<path d="M475.5 192.4H511.2M487 197.7H499.7" stroke-width="2"/>
<path d="M747.2 250.1V261.6M747.2 296.2V307.7"/>
<path d="M747.2 331V339M747.2 368V376.9"/>
<path d="M630 434.6H654.5"/>
<path d="M490 434.6H504M539.5 434.6H552" stroke-width="2"/>
<path d="M678 400V412.2L660.3 427.6"/>
<path d="M660.3 441.1L678.4 456.9V464"/>
<path d="M349.4 388.4H357M389 388.4H400" stroke-width="2"/>
<path d="M361 387L382.6 373.6"/>
</g>
<rect x="742.6" y="261.6" width="9.4" height="34.6" fill="#ccc8b4" stroke="#5e1010" stroke-width="2"/>
<rect x="504.2" y="430.2" width="35.2" height="8.6" fill="#d6c8b2" stroke="#5e1010" stroke-width="2"/>
<rect x="654.6" y="417" width="5.6" height="34.8" fill="#dcc0b0" stroke="#5a1010" stroke-width="1.6"/>
<path d="M678.4 456.9L666.7 451.9L673.4 446.8Z" fill="#dcbcac" stroke="#5a1010" stroke-width="1.6" stroke-linejoin="round"/>
<circle cx="747.5" cy="353.5" r="14.4" fill="#1e0404" stroke="#6a1010" stroke-width="1.2"/>
<path d="M747.2 339V368" stroke="#7a1414" stroke-width="1.6"/>
<g fill="none" stroke="#7a1414" stroke-width="1.4"><path d="M740.2 350.8H754.8L747.5 359.5Z M740.2 359.5H754.8"/></g>
<rect x="357.2" y="386.4" width="3.4" height="3.8" fill="#a05050" stroke="#7a1818" stroke-width="1.3"/>
<rect x="385.2" y="386.4" width="3.4" height="3.8" fill="#a05050" stroke="#7a1818" stroke-width="1.3"/>
<circle cx="389.8" cy="377.2" r="4.6" fill="#861414"/><path d="M388.3 378.5l1.5-2.5 1.5 2.5" stroke="#e8a0a0" stroke-width=".7" fill="none"/>
<circle cx="401.8" cy="377.2" r="4.6" fill="#861414"/><path d="M400.3 376l1.5 2.5 1.5-2.5" stroke="#e8a0a0" stroke-width=".7" fill="none"/>
<g stroke="#2a2e98" stroke-width="1.2" fill="none"><circle cx="724.2" cy="377.5" r="3.8"/><path d="M724.2 371.5V383.5M718.2 377.5H730.2"/></g>
</svg>
<div class="t" style="left:252.00px;top:113.30px;font-family:'Liberation Serif',serif;font-weight:bold;font-size:15px;color:#7a1212;transform:scaleX(1.0476);-webkit-text-stroke:0.9px #7a1212;word-spacing:0.5px;">TRANSISTOR POLARIZADO COMO COLECTOR COMUN.</div>
<div class="t" style="left:517.14px;top:192.50px;font-family:'Liberation Sans',sans-serif;font-weight:normal;font-size:13px;color:#1e1e1e;transform:scaleX(1.0600);">BAT1</div>
<div class="t" style="left:518.70px;top:211.50px;font-family:'Liberation Sans',sans-serif;font-weight:normal;font-size:8.5px;color:#1e1e1e;transform:scaleX(1.0533);">12V</div>
<div class="t" style="left:758.00px;top:261.70px;font-family:'Liberation Sans',sans-serif;font-weight:normal;font-size:13.5px;color:#1e1e1e;">R1</div>
<div class="t" style="left:759.00px;top:279.60px;font-family:'Liberation Sans',sans-serif;font-weight:normal;font-size:9px;color:#1e1e1e;transform:scaleX(1.0667);">330</div>
<div class="t" style="left:767.00px;top:340.70px;font-family:'Liberation Sans',sans-serif;font-weight:normal;font-size:13px;color:#1e1e1e;">D1</div>
<div class="t" style="left:768.00px;top:358.60px;font-family:'Liberation Sans',sans-serif;font-weight:normal;font-size:8.5px;color:#1e1e1e;transform:scaleX(1.0959);">LED-GREEN</div>
<div class="t" style="left:685.00px;top:411.70px;font-family:'Liberation Sans',sans-serif;font-weight:normal;font-size:13.5px;color:#1e1e1e;transform:scaleX(0.9722);">Q1</div>
<div class="t" style="left:685.00px;top:430.00px;font-family:'Liberation Sans',sans-serif;font-weight:normal;font-size:8.5px;color:#1e1e1e;transform:scaleX(1.0667);">2N3904</div>
<div class="t" style="left:502.94px;top:415.00px;font-family:'Liberation Sans',sans-serif;font-weight:normal;font-size:13.5px;color:#1e1e1e;transform:scaleX(1.0625);">R2</div>
<div class="t" style="left:504.00px;top:442.00px;font-family:'Liberation Sans',sans-serif;font-weight:normal;font-size:8.5px;color:#1e1e1e;transform:scaleX(1.0714);">500</div>
<div class="a" style="left:0;top:657px;width:1280px;height:26px;background:linear-gradient(#f2f5fb,#e8f0f8 40%,#d0e4f6 75%,#b6d6f2);border-bottom:1px solid #8a98a8"></div>
<div class="a" style="left:3.5px;top:660px;width:2px;height:21px;background:repeating-linear-gradient(#94a4ba 0 1.5px,transparent 1.5px 3.5px)"></div>
<svg class="a" style="left:20px;top:660px;" width="120" height="20" viewBox="0 0 120 20"><path d="M3.2 2.4L10.9 9.5L3.2 16.6Z" fill="#1a52b2"/><rect x="36" y="2" width="2.2" height="15" fill="#1a52b2"/><path d="M40 2.2L47.3 9.5L40 16.8Z" fill="#1a52b2"/><rect x="71" y="3" width="3" height="13.6" fill="#1a52b2"/><rect x="76" y="3" width="2.8" height="13.6" fill="#1a52b2"/><rect x="103" y="4" width="12" height="11.8" fill="#1a52b2"/></svg>
<div class="a" style="left:148px;top:662px;width:1px;height:18px;background:#9fb0c4;box-shadow:1px 0 0 #f6f9fd"></div>
<svg class="a" style="left:160px;top:663.5px;" width="13" height="13" viewBox="0 0 13 13"><circle cx="6.5" cy="6.5" r="6" fill="#3e4654"/><circle cx="6.5" cy="3.6" r="1.1" fill="#fff"/><rect x="5.5" y="5.5" width="2.1" height="5" fill="#fff"/></svg>
<div class="t" style="left:177.77px;top:665.10px;font-family:'Liberation Sans',sans-serif;font-weight:normal;font-size:12px;color:#7b838e;transform:scaleX(0.8278);">No Messages</div>
<div class="a" style="left:241px;top:660px;width:1px;height:22px;background:#b0bfd0;box-shadow:1px 0 0 #f6f9fd"></div>
<div class="a" style="left:250.5px;top:661px;width:2px;height:20px;background:repeating-linear-gradient(#94a4ba 0 1.5px,transparent 1.5px 3.5px)"></div>
<div class="t" style="left:258.57px;top:665.40px;font-family:'Liberation Sans',sans-serif;font-weight:normal;font-size:12px;color:#1e1e1e;transform:scaleX(0.8269);">Root sheet 1</div>
<div class="a" style="left:634px;top:660px;width:1px;height:22px;background:#b0bfd0;box-shadow:1px 0 0 #f6f9fd"></div>
<div class="a" style="left:640.5px;top:661px;width:2px;height:20px;background:repeating-linear-gradient(#94a4ba 0 1.5px,transparent 1.5px 3.5px)"></div>
<div class="t" style="left:916.00px;top:665.20px;font-family:'Liberation Sans',sans-serif;font-weight:normal;font-size:12px;color:#1e1e1e;transform:scaleX(0.8049);">-2600.0</div>
<div class="t" style="left:1269.50px;top:666.00px;font-family:'Liberation Sans',sans-serif;font-weight:normal;font-size:11px;color:#2a3a68;transform:scaleX(0.7222);">th</div>
<div class="a" style="left:1275px;top:97px;width:5px;height:586px;background:linear-gradient(90deg,#e4e8ee,#f4f6f9)"></div>
<div class="a" style="left:0;top:683px;width:1280px;height:37px;background:linear-gradient(105deg,#7e5a3c 0%,#9a7250 9%,#825c3e 16%,#8e6646 28%,#885f40 38%,#94704e 50%,#8a6444 62%,#8e6a4c 74%,#86603f 86%,#8a6648 100%)"></div>
<div class="a" style="left:74px;top:684px;width:54px;height:35px;background:rgba(255,255,255,0.12);border:1px solid #a89280"></div>
<div class="a" style="left:190px;top:684px;width:55px;height:35px;background:rgba(255,255,255,0.12);border:1px solid #a89280"></div>
<div class="a" style="left:248px;top:684px;width:55px;height:35px;background:rgba(255,255,255,0.22);border:1px solid #d8c8b8"></div>
<div class="a" style="left:306px;top:684px;width:55px;height:35px;background:rgba(255,255,255,0.12);border:1px solid #a89280"></div>
<svg class="a" style="left:27px;top:685px;" width="32" height="32" viewBox="0 0 32 32"><text x="17.5" y="28.5" font-family="Liberation Sans" font-weight="bold" font-size="42" fill="#34a8ec" stroke="#1a6cc0" stroke-width="1" text-anchor="middle">e</text><ellipse cx="16" cy="16" rx="15" ry="7" transform="rotate(-40 16 16)" fill="none" stroke="#f2c428" stroke-width="2.3" stroke-dasharray="66 12" stroke-dashoffset="-10"/></svg>
<svg class="a" style="left:86px;top:688px;" width="30" height="29" viewBox="0 0 30 29"><path d="M2 3h8l2 2h15v19H2z" fill="#e8c870"/><rect x="3" y="4" width="3" height="2" fill="#30a040"/><rect x="14" y="5" width="4" height="3" fill="#c05050"/><rect x="19" y="6" width="4" height="2.5" fill="#60a0c0"/><path d="M1 9h28v16H1z" fill="#f4dc98"/><path d="M6 16h18v12h-5v-6h-8v6H6z" fill="#78b8e8" stroke="#3a80c0" stroke-width=".8"/></svg>
<svg class="a" style="left:145px;top:687px;" width="30" height="30" viewBox="0 0 30 30"><circle cx="15" cy="15" r="13" fill="#e0a828"/><path d="M15 15L3.7 8.5A13 13 0 0 1 26.3 8.5Z" fill="#d84a38"/><path d="M15 15L3.7 8.5A13 13 0 0 0 15 28Z" fill="#2a9a48"/><circle cx="15" cy="15" r="6" fill="#fff"/><circle cx="15" cy="15" r="4.6" fill="#3a7ae0"/></svg>
<svg class="a" style="left:202px;top:687px;" width="30" height="28" viewBox="0 0 30 28"><rect x="12" y="4" width="17" height="20" fill="#fff"/><path d="M0 3l19-3v28L0 25z" fill="#d2502a"/><text x="8.5" y="19" font-family="Liberation Sans" font-weight="bold" font-size="12" fill="#fff" text-anchor="middle">P</text><path d="M20 13h7M20 16h7M20 19h7" stroke="#c04a2a" stroke-width="1.2"/><path d="M22 5a4 4 0 1 0 4 4h-4z" fill="#d2502a"/></svg>
<svg class="a" style="left:258px;top:687px;" width="34" height="28" viewBox="0 0 34 28"><g fill="none" stroke="#d8d4d0" stroke-width="1.2" opacity=".85"><ellipse cx="17" cy="14" rx="15" ry="5" transform="rotate(35 17 14)"/><ellipse cx="17" cy="14" rx="15" ry="5" transform="rotate(-35 17 14)"/></g><circle cx="17" cy="14" r="6.5" fill="#2a3a58"/><circle cx="16" cy="12.5" r="4.5" fill="#8aa8d0"/><circle cx="15" cy="11.5" r="2" fill="#dce8f8"/></svg>
<svg class="a" style="left:319px;top:686px;" width="31" height="31" viewBox="0 0 31 31"><rect x="0" y="0" width="31" height="30" fill="#eef2fa"/><rect x="1" y="1" width="29" height="28" fill="#5a70c8"/><rect x="6" y="3" width="19" height="11" fill="#a8d0f0"/><rect x="6" y="16" width="19" height="11" fill="#a8d0f0"/><path d="M3 3v24M28 3v24" stroke="#c8d8f0" stroke-width="1.5" stroke-dasharray="2 2"/><circle cx="22" cy="22" r="7.5" fill="#2a0a0a"/><circle cx="22" cy="22" r="6.5" fill="#e02020"/><circle cx="20" cy="20" r="2.5" fill="#ff8080"/></svg>
<div class="a" style="left:1275px;top:683px;width:5px;height:37px;background:linear-gradient(#5a6a80,#8090a8,#4a5a70)"></div>
<div class="a" style="left:1064px;top:562px;width:192px;height:144px;overflow:hidden"><svg class="a" style="left:0px;top:0px;filter:blur(1px)" width="192" height="144" viewBox="0 0 192 144"><defs>
<pattern id="chk" patternUnits="userSpaceOnUse" width="11" height="11" patternTransform="rotate(-10)"><rect width="11" height="11" fill="#f2f4fa"/><rect x="0" width="4.5" height="11" fill="#2a44a8" opacity=".6"/><rect y="0" width="11" height="4.5" fill="#2a44a8" opacity=".45"/></pattern>
<linearGradient id="wall" x1="0" y1="0" x2="0" y2="1"><stop offset="0" stop-color="#2a2a2a"/><stop offset=".5" stop-color="#3c3c3e"/><stop offset="1" stop-color="#4a4a4a"/></linearGradient>
<linearGradient id="skin" x1="0" y1="0" x2="0" y2="1"><stop offset="0" stop-color="#e6cabc"/><stop offset="1" stop-color="#cca294"/></linearGradient>
</defs>
<g>
<rect x="-2" y="-2" width="196" height="147" fill="url(#wall)"/>
<rect x="34" y="24" width="24" height="62" fill="#505054"/>
<rect x="64" y="24" width="18" height="62" fill="#48484c"/>
<rect x="166" y="20" width="20" height="76" fill="#262628"/>
<rect x="126" y="20" width="26" height="20" fill="#4a4a4a"/>
<g stroke="#f2f2f2" stroke-width="3" fill="none">
<path d="M4 21H92M125 17H192"/>
<path d="M3 0L0 92"/>
<path d="M12 21V93"/>
<path d="M30 0V84c0 5-7 9-11 11M30 84c0 5 5 9 9 11"/>
<path d="M60.5 0V84c0 5-7 9-11 11M60.5 84c0 5 5 9 9 11"/>
<path d="M83 0V60M91 0V20"/>
<path d="M122 0V17"/>
<path d="M155 0V92M163 0V90c4 3 12 4 26 3"/>
<path d="M186.5 0L192 70"/>
</g>
<rect x="27" y="64" width="6" height="7" rx="2" fill="#f0f0f0"/><rect x="57.5" y="64" width="6" height="7" rx="2" fill="#f0f0f0"/>
<rect x="-2" y="93" width="80" height="52" fill="#1b3432"/>
<path d="M2 108c14-5 28-5 40 0" stroke="#7a8a84" stroke-width="2" fill="none"/>
<rect x="150" y="96" width="44" height="49" fill="#1e2a2c"/>
<path d="M114 16c-18 0-30 10-32 30-2 24-6 48-16 64l20 10 72-6c-10-20-8-46-10-68-2-20-12-30-34-30z" fill="#2c1e1c"/>
<path d="M97 90h38v24h-38z" fill="#c0907e"/>
<path d="M90 60c0-22 9-34 25-34s26 12 26 34-8 39-26 39-25-17-25-39z" fill="url(#skin)"/>
<path d="M89 52c2-14 10-24 24-25 2 0 2 2-1 5-10 4-18 12-23 20z" fill="#2c1e1c"/>
<path d="M142 52c-2-14-10-24-25-25-2 0-2 2 1 5 10 4 18 12 24 20z" fill="#2c1e1c"/>
<g fill="none" stroke="#a0a0a4" stroke-width="1.1"><rect x="91" y="48" width="22" height="11" rx="3"/><rect x="118" y="48" width="22" height="11" rx="3"/><path d="M113 51h5"/></g>
<ellipse cx="116" cy="77" rx="8" ry="3.8" fill="#a05858"/><ellipse cx="116" cy="77" rx="5" ry="1.6" fill="#5a2a2a"/>
<path d="M81 52c0-10 3-18 8-24M151 52c0-10-3-18-10-25" stroke="#e4e4e4" stroke-width="2.2" fill="none"/>
<rect x="79" y="51" width="12" height="24" rx="4" fill="#e8e8ea"/>
<rect x="140" y="53" width="12" height="23" rx="4" fill="#e4e4e6"/>
<path d="M26 145l14-22 20-12 25-12 22 12 10 8 22-18 26 10 21 12 8 12v6z" fill="url(#chk)"/>
<path d="M85 99l22 12 10 8M117 119l22-18" stroke="#e8ecf4" stroke-width="2" fill="none"/>
<g stroke="#f0f0f0" stroke-width="1.1" fill="none"><path d="M85 75c8 25 22 45 34 68"/><path d="M143 76c0 25 -2 45-4 67"/></g>
</g>
</svg></div>
<div class="t" style="left:1202.00px;top:705.00px;font-family:'Liberation Sans',sans-serif;font-weight:normal;font-size:11px;color:#eadcc8;transform:scaleX(0.9818);">06/04/2020</div>
</body></html>
